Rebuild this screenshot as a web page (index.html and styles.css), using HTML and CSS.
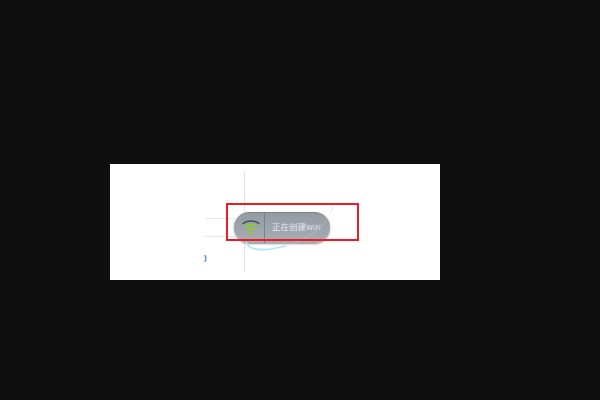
FILE: index.html
```html
<!DOCTYPE html>
<html lang="zh-CN">
<head>
    <meta charset="UTF-8">
    <title>正在创建WiFi</title>
    <link rel="stylesheet" href="styles.css">
</head>
<body>
    <div class="shot">
        <div class="line-v"></div>
        <div class="line-h line-top"></div>
        <div class="line-h line-bottom"></div>
        <span class="bracket">)</span>

        <div class="pill">
            <div class="pill-icon">
                <svg width="20" height="18" viewBox="0 0 20 18">
                    <path d="M1.500 5C6 1 14 1 18.500 5" fill="none" stroke="#4a4f57" stroke-width="1.300"/>
                    <path d="M4 8C7.500 5 12.500 5 16 8" fill="none" stroke="#8ad41c" stroke-width="1.700"/>
                    <path d="M6.500 11C8.500 9.500 11.500 9.500 13.500 11" fill="none" stroke="#8ad41c" stroke-width="1.700"/>
                    <circle cx="10" cy="14" r="1.600" fill="#8ad41c"/>
                </svg>
            </div>
            <div class="pill-text">正在创建<span class="pill-latin">WiFi</span></div>
        </div>

        <svg class="swoosh" width="110" height="50" viewBox="0 0 110 50">
            <path d="M6 34C9 43 22 44 46 38" fill="none" stroke="#a9ebfb" stroke-width="1.800"/>
            <path d="M46 38C68 31 84 20 90 5" fill="none" stroke="#bfeefa" stroke-width="1" opacity="0.3"/>
            <path d="M90 5C92 3 92.500 0 93 -2" fill="none" stroke="#bfeefa" stroke-width="1"/>
        </svg>

        <div class="red-box"></div>
    </div>
</body>
</html>
```

FILE: styles.css
```css
* {
    margin: 0;
    padding: 0;
    box-sizing: border-box;
}

body {
    background: #0f0f0f;
    padding: 164px 0 0 110px;
    height: 400px;
    overflow: hidden;
    font-family: "Noto Sans CJK SC", "Liberation Sans", sans-serif;
}

.shot {
    position: relative;
    width: 330px;
    height: 116px;
    background: #ffffff;
}

.line-v {
    position: absolute;
    left: 134px;
    top: 7px;
    width: 1px;
    height: 101px;
    background: #e4e4e6;
}

.line-h {
    position: absolute;
    left: 95px;
    width: 30px;
    height: 1px;
    background: #e6e6e6;
}

.line-top {
    top: 54px;
}

.line-bottom {
    top: 72px;
}

.bracket {
    position: absolute;
    left: 94px;
    top: 88px;
    font-family: "Liberation Sans", sans-serif;
    font-size: 8px;
    line-height: 12px;
    font-weight: bold;
    color: #2f6fc0;
}

.swoosh {
    position: absolute;
    left: 130px;
    top: 44px;
    overflow: visible;
}

.pill {
    position: absolute;
    left: 124px;
    top: 48px;
    width: 96px;
    height: 31px;
    display: flex;
    border-radius: 16px;
    border-top: 1px solid #7d838a;
    background: linear-gradient(#949ba3, #a6adb3);
    box-shadow: 0 1px 2px rgba(70, 70, 70, 0.6);
}

.pill-icon {
    width: 31px;
    display: flex;
    align-items: center;
    justify-content: center;
    padding-left: 3px;
    border-right: 1px solid #7a8086;
}

.pill-text {
    flex: 1;
    padding-left: 7px;
    font-size: 8.500px;
    line-height: 27px;
    color: #e6e9eb;
    white-space: nowrap;
}

.pill-latin {
    font-family: "DejaVu Sans", sans-serif;
    font-size: 7px;
    letter-spacing: 0.200px;
}

.red-box {
    position: absolute;
    left: 116px;
    top: 39px;
    width: 133px;
    height: 38px;
    border: 2px solid #ec1c24;
}
```
